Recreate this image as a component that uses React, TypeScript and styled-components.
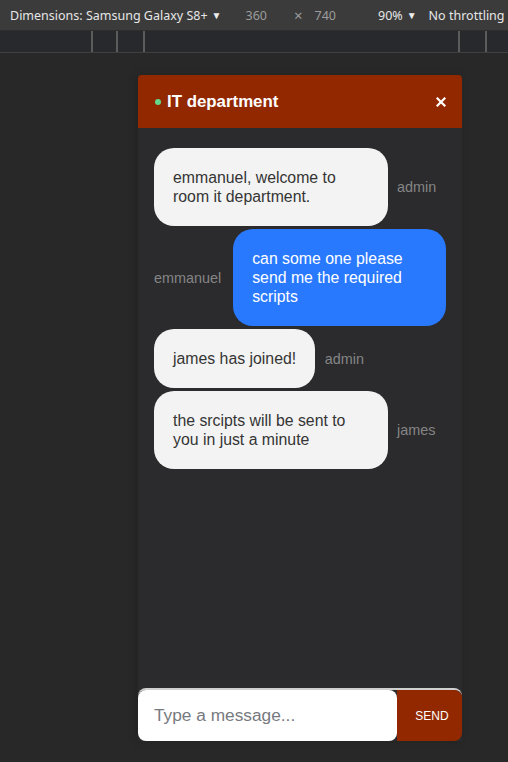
import React from "react";
import styled, { createGlobalStyle } from "styled-components";

const Global = createGlobalStyle`
  html, body { margin: 0; padding: 0; background: #282828; }
  body { font-family: "Liberation Sans", Arial, sans-serif; overflow: hidden; }
  * { box-sizing: border-box; }
`;

const Page = styled.div`
  width: 508px;
  height: 762px;
  display: flex;
  flex-direction: column;
  background: #282828;
`;

const DevBar = styled.div`
  height: 31px;
  display: flex;
  align-items: center;
  background: #3b3b3b;
  border-bottom: 1px solid #2e2e2e;
  font-family: "Noto Sans", "Open Sans", sans-serif;
  font-size: 12.5px;
  color: #e6e6e6;
  white-space: nowrap;
  overflow: hidden;
`;

const DevItem = styled.span<{ $left: number; $muted?: boolean; $big?: boolean }>`
  margin-left: ${(p) => p.$left}px;
  color: ${(p) => (p.$muted ? "#9b9b9b" : "#e6e6e6")};
  font-size: ${(p) => (p.$big ? "15px" : "inherit")};
  display: inline-flex;
  align-items: center;
`;

const Caret = styled.span`
  font-size: 10px;
  margin-left: 4px;
  color: #ececec;
`;

const Ruler = styled.div`
  height: 22px;
  display: flex;
  background: #28292c;
  border-bottom: 1px solid #404040;
`;

const Tick = styled.div<{ $left: number }>`
  width: 2px;
  height: 100%;
  margin-left: ${(p) => p.$left}px;
  background: #5c5c5c;
`;

const Stage = styled.div`
  flex: 1;
  padding: 22px 0 0 138px;
`;

const Device = styled.div`
  width: 324px;
  height: 666px;
  display: flex;
  flex-direction: column;
  background: #2b2b2d;
  box-shadow: -2px 0 8px rgba(0, 0, 0, 0.15);
`;

const Header = styled.div`
  height: 53px;
  flex: none;
  display: flex;
  align-items: center;
  justify-content: space-between;
  padding: 0 16px 0 17px;
  background: #922800;
  border-radius: 4px 4px 0 0;
`;

const HeaderLeft = styled.div`
  display: flex;
  align-items: center;
  gap: 6px;
`;

const OnlineDot = styled.span`
  width: 6px;
  height: 6px;
  border-radius: 50%;
  background: #62d98d;
`;

const Title = styled.h3`
  margin: 0;
  font-size: 16.85px;
  font-weight: 700;
  color: #ffffff;
`;

const CloseButton = styled.button`
  border: 0;
  background: none;
  padding: 0;
  width: 10px;
  height: 10px;
  display: flex;
  cursor: pointer;
`;

const Messages = styled.div`
  flex: 1;
  display: flex;
  flex-direction: column;
  gap: 3px;
  padding: 20px 16px;
  overflow: hidden;
`;

const Row = styled.div<{ $mine?: boolean }>`
  display: flex;
  align-items: center;
  justify-content: ${(p) => (p.$mine ? "flex-end" : "flex-start")};
`;

const Bubble = styled.div<{ $mine?: boolean }>`
  max-width: 80%;
  padding: 19.8px 19px;
  border-radius: 20px;
  background: ${(p) => (p.$mine ? "#2979ff" : "#f3f3f3")};
  color: ${(p) => (p.$mine ? "#ffffff" : "#353535")};
  font-size: 15.84px;
  line-height: 19.2px;
`;

const Sender = styled.p<{ $mine?: boolean }>`
  margin: 0;
  padding: ${(p) => (p.$mine ? "0 12px 0 0" : "0 0 0 9.5px")};
  font-size: 14.4px;
  color: #858585;
  white-space: nowrap;
`;

const Form = styled.form`
  height: 53px;
  flex: none;
  display: flex;
  border-top: 2px solid #d0d0d0;
  border-radius: 8px 8px 0 0;
`;

const Input = styled.input`
  flex: 1;
  min-width: 0;
  border: 0;
  border-radius: 8px;
  padding: 0 16px;
  font-family: "Liberation Sans", Arial, sans-serif;
  font-size: 17.3px;
  background: #ffffff;
  outline: none;
  &::placeholder { color: #777a80; }
`;

const SendButton = styled.button`
  width: 65px;
  border: 0;
  border-radius: 0 8px 8px 0;
  background: #922800;
  color: #ffffff;
  font-family: "Liberation Sans", Arial, sans-serif;
  font-size: 12px;
  text-transform: uppercase;
  padding: 0 0 0 5px;
  cursor: pointer;
`;

type Msg = { user: string; text: string; mine?: boolean };

const messages: Msg[] = [
  { user: "admin", text: "emmanuel, welcome to room it department." },
  { user: "emmanuel", text: "can some one please send me the required scripts", mine: true },
  { user: "admin", text: "james has joined!" },
  { user: "james", text: "the srcipts will be sent to you in just a minute" },
];

export default function App() {
  return (
    <>
      <Global />
      <Page>
        <DevBar>
          <DevItem $left={10}>
            Dimensions: Samsung Galaxy S8+<Caret>▼</Caret>
          </DevItem>
          <DevItem $left={24} $muted>360</DevItem>
          <DevItem $left={27} $muted $big>×</DevItem>
          <DevItem $left={12} $muted>740</DevItem>
          <DevItem $left={42}>
            90%<Caret>▼</Caret>
          </DevItem>
          <DevItem $left={12}>No throttling</DevItem>
        </DevBar>
        <Ruler>
          <Tick $left={91} />
          <Tick $left={23} />
          <Tick $left={25} />
          <Tick $left={313} />
          <Tick $left={25} />
        </Ruler>
        <Stage>
          <Device>
            <Header>
              <HeaderLeft>
                <OnlineDot />
                <Title>IT department</Title>
              </HeaderLeft>
              <CloseButton aria-label="close">
                <svg width="10" height="10" viewBox="0 0 10 10">
                  <path d="M1.5 1.5 L8.5 8.5 M8.5 1.5 L1.5 8.5" stroke="#fff" strokeWidth="2.2" strokeLinecap="square" />
                </svg>
              </CloseButton>
            </Header>
            <Messages>
              {messages.map((m, i) =>
                m.mine ? (
                  <Row key={i} $mine>
                    <Sender $mine>{m.user}</Sender>
                    <Bubble $mine>{m.text}</Bubble>
                  </Row>
                ) : (
                  <Row key={i}>
                    <Bubble>{m.text}</Bubble>
                    <Sender>{m.user}</Sender>
                  </Row>
                )
              )}
            </Messages>
            <Form onSubmit={(e) => e.preventDefault()}>
              <Input type="text" placeholder="Type a message..." />
              <SendButton type="submit">Send</SendButton>
            </Form>
          </Device>
        </Stage>
      </Page>
    </>
  );
}
